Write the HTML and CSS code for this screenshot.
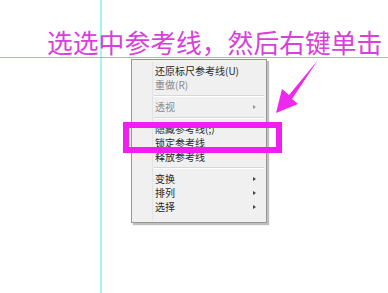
FILE: index.html
```html
<!doctype html>
<html lang="zh-CN">
<head>
    <meta charset="UTF-8">
    <title>选中参考线</title>
    <link rel="stylesheet" href="styles.css">
</head>
<body>
<div class="canvas">
    <div class="guide guide--v"></div>
    <div class="guide guide--h"></div>

    <h1 class="caption">选选中参考线，然后右键单击</h1>

    <ul class="menu">
        <li class="menu__item">还原标尺参考线(U)</li>
        <li class="menu__item menu__item--off">重做(R)</li>
        <li class="menu__sep"></li>
        <li class="menu__item menu__item--off menu__item--sub">透视</li>
        <li class="menu__sep"></li>
        <li class="menu__item">隐藏参考线(;)</li>
        <li class="menu__item">锁定参考线</li>
        <li class="menu__item">释放参考线</li>
        <li class="menu__sep"></li>
        <li class="menu__item menu__item--sub">变换</li>
        <li class="menu__item menu__item--sub">排列</li>
        <li class="menu__item menu__item--sub">选择</li>
    </ul>

    <div class="mark"></div>

    <svg class="pointer" width="388" height="293" viewBox="0 0 388 293">
        <polygon points="318,60 289,95 282,89 276,113 298,104 292,99" fill="#ee28ee"/>
    </svg>
</div>
</body>
</html>
```

FILE: styles.css
```css
html,body{margin:0;padding:0;background:#fff}
body{font-family:'Noto Sans CJK SC','Noto Sans',sans-serif}
.canvas{position:relative;width:388px;height:293px;overflow:hidden}

/* guides */
.guide{position:absolute}
.guide--v{left:100px;top:0;width:2px;height:293px;background:#a6f4f2}
.guide--h{left:0;top:57px;width:388px;height:1px;background:#a9b0f2}

.caption{position:absolute;left:47px;top:29px;margin:0;font-size:25.8px;line-height:26px;font-weight:400;color:#d93fd9;white-space:nowrap}

/* context menu */
.menu{position:absolute;left:131px;top:59px;width:134px;margin:0;padding:4px 0 8px;list-style:none;background:#f0f0f0;border:1px solid #979797;box-shadow:2px 2px 1px rgba(0,0,0,.25)}
.menu:before{content:'';position:absolute;left:20px;top:2px;bottom:2px;width:1px;background:#e2e3e3}
.menu__item{position:relative;height:14px;padding-left:23px;font-size:10px;line-height:14px;color:#2a2a2a}
.menu__item--off{color:#8a8a8a}
.menu__item--sub:after{content:'';position:absolute;right:10px;top:5px;border-left:3px solid #444;border-top:2px solid transparent;border-bottom:2px solid transparent}
.menu__item--off.menu__item--sub:after{border-left-color:#999}
.menu__sep{height:1px;margin:3px 2px 3px 22px;background:#d7d7d7;border-bottom:1px solid #fff}

/* annotation */
.mark{position:absolute;left:123px;top:122px;width:147px;height:19px;border:6px solid #f01ef0}
.pointer{position:absolute;left:0;top:0}
```
